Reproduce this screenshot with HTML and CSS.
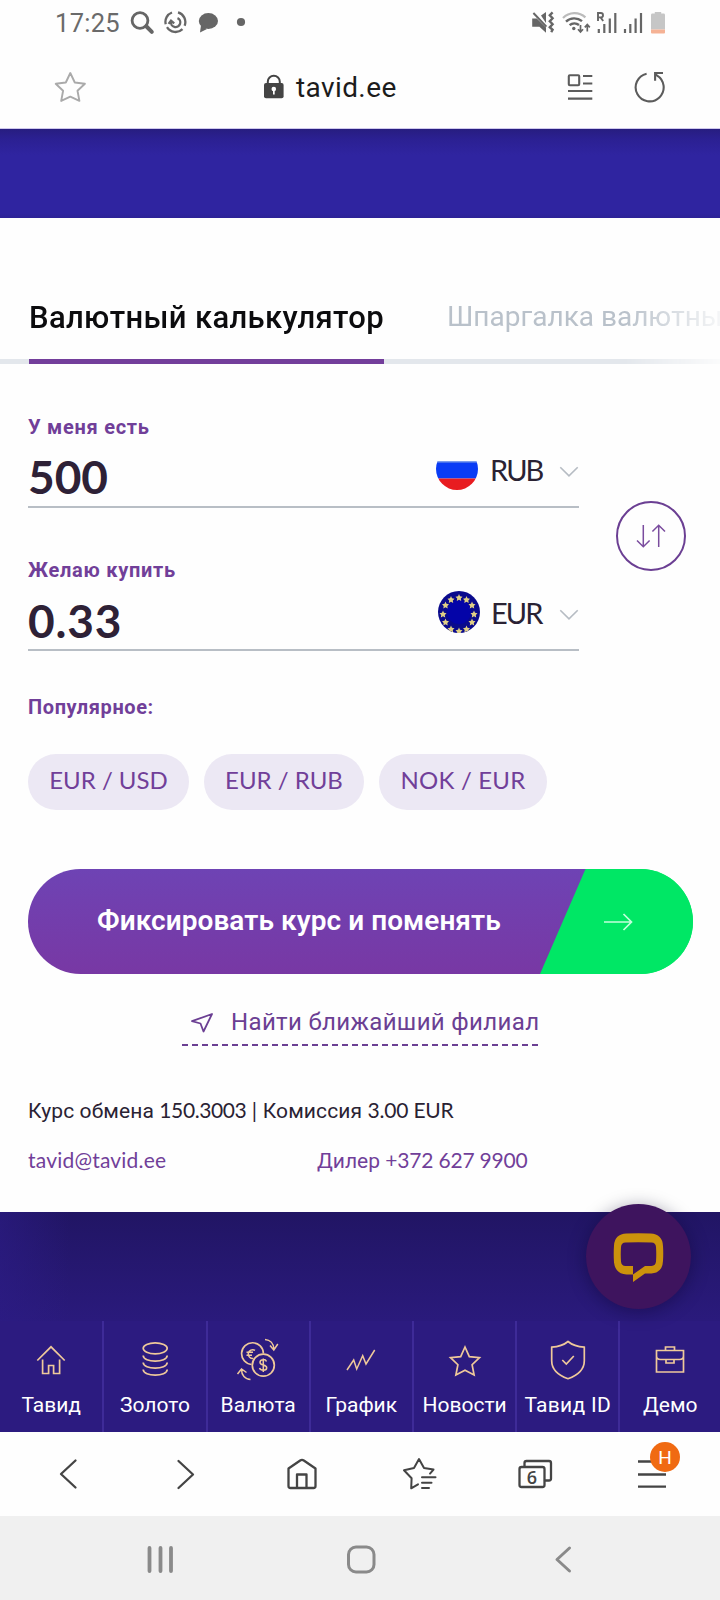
FILE: index.html
```html
<!DOCTYPE html>
<html lang="ru">
<head>
<meta charset="utf-8">
<title>tavid.ee</title>
<link rel="stylesheet" href="styles.css">
</head>
<body>
<div class="screen">

  <header class="status">
    <span class="clock">17:25</span>
    <svg class="ic-search" width="26" height="44" viewBox="129 0 26 44" fill="none" stroke="#666" stroke-linecap="round">
      <circle cx="140" cy="20.5" r="7.9" stroke-width="2.8"/><path d="M146.5 26.5L151.8 31.8" stroke-width="4"/>
    </svg>
    <svg class="ic-sync" width="24" height="44" viewBox="163 0 24 44" fill="none" stroke="#666" stroke-width="2.3">
      <path d="M172 12.500a10 10 0 0 0-6.300 11.700M167 27.200a10 10 0 0 0 15.500 2M184.600 25.800a10 10 0 0 0-6.600-13.400"/>
      <path d="M171 21.500a4.700 4.700 0 1 0 6.500-3.400M174.200 23.400l-3.200-2.700-2.400 3.200"/>
    </svg>
    <svg class="ic-bubble" width="22" height="44" viewBox="197 0 22 44" fill="#666">
      <ellipse cx="208.4" cy="21" rx="9.6" ry="7.9"/><path d="M201 25l-1 7.4 7-3.4z"/>
    </svg>
    <svg class="ic-dot" width="10" height="44" viewBox="236 0 10 44" fill="#666"><circle cx="241" cy="22" r="4.1"/></svg>

    <div class="status-right">
      <svg width="26" height="44" viewBox="530 0 26 44">
        <path fill="#666" d="M532.2 18.6h4.6l9.2 9v5.2l-6.600-6h-7.200zM541 15.600l5-3.600v11z"/>
        <path d="M533.400 13l13 13.600" stroke="#666" stroke-width="2"/>
        <path d="M552.600 12.400l-2.800 2.800 2.800 3-2.800 3 2.800 3-2.800 3 2.800 2.600-1.400 2.400" fill="none" stroke="#666" stroke-width="2.400"/>
      </svg>
      <svg width="30" height="44" viewBox="562 0 30 44" fill="none">
        <path d="M563 18a16 16 0 0 1 22.400-.6" stroke="#bbb" stroke-width="2.200"/>
        <path d="M566 21.600a12 12 0 0 1 16-.4M569.600 25.200a7.500 7.500 0 0 1 9.400-.2" stroke="#666" stroke-width="2.400"/>
        <circle cx="573.800" cy="28.500" r="1.700" fill="#666"/>
        <path d="M580.500 25v6.500M578 29.200l2.500 2.800 2.500-2.800M587.300 31.500v-6.500M584.800 27.400l2.500-2.800 2.500 2.800" stroke="#666" stroke-width="1.700"/>
      </svg>
      <svg class="ic-roam" width="24" height="44" viewBox="596 0 24 44" fill="none" stroke="#666">
        <path d="M598 21v-8h2.800a2 2 0 0 1 0 4.400h-2.800M600.600 17.400l2.600 3.600" stroke-width="1.900"/>
        <path d="M598.800 29v4M604.300 24v9M609.800 18.500v14.500M615.300 13v20" stroke-width="2.200"/>
      </svg>
      <svg class="ic-sig" width="22" height="44" viewBox="622 0 22 44" fill="none" stroke="#666">
        <path d="M625 29v4M630.300 24v9M635.600 18.500v14.500M641 13v20" stroke-width="2.200"/>
      </svg>
      <svg class="ic-bat" width="16" height="44" viewBox="650 0 16 44">
        <path fill="#c6c6c6" d="M651 15q0-1.400 1.400-1.400h2.400V12h6.400v1.600h2.400q1.400 0 1.400 1.400v14.500h-14z"/>
        <path fill="#f5b295" d="M651 29.400h14v3q0 1-1 1h-12q-1 0-1-1z"/>
      </svg>
    </div>
  </header>

  <div class="urlbar">
    <svg class="ic-fav" width="32" height="84" viewBox="54 44 32 84" fill="none" stroke="#aaa" stroke-width="1.900" stroke-linejoin="round">
      <path d="M70.300 73l4.500 9.500 10.100 1.300-7.400 7 1.900 10.100-9.100-4.200-9.100 4.200 1.900-10.100-7.400-7 10.100-1.300z"/>
    </svg>
    <div class="host">
      <svg width="22" height="84" viewBox="263 44 22 84">
        <rect x="264" y="83" width="19.600" height="15.200" rx="2" fill="#444"/>
        <path d="M267.800 84v-2.200a6 6 0 0 1 12 0v2.200" fill="none" stroke="#444" stroke-width="2"/>
        <circle cx="273.800" cy="89" r="2.300" fill="#fff"/><path d="M273 90h1.700v4.500h-1.700z" fill="#fff"/>
      </svg>
      <span class="host-name">tavid.ee</span>
    </div>
    <svg class="ic-reader" width="28" height="84" viewBox="566 44 28 84" fill="none" stroke="#5c5c5c" stroke-width="2.100">
      <rect x="568.800" y="75.300" width="10.400" height="10" rx="1"/>
      <path d="M583 76h9.300M583 83.500h9.300M568 91h24.300M568 98.600h24.300"/>
    </svg>
    <svg class="ic-reload" width="34" height="84" viewBox="634 44 34 84" fill="none" stroke="#5c5c5c" stroke-width="2.100">
      <path d="M646.600 73.700a14 14 0 1 0 10.200 1.600l-1.600-1.400"/><path d="M663 73h-7.900v7.800"/>
    </svg>
  </div>

  <div class="band-top"></div>

  <main class="card">
    <nav class="tabs">
      <a class="tab active">Валютный калькулятор</a>
      <a class="tab">Шпаргалка валютны</a>
    </nav>

    <section class="calc">
      <div class="fields">
        <div class="field">
          <label class="label">У меня есть</label>
          <div class="row">
            <span class="amount">500</span>
            <div class="cur">
              <svg class="flag" width="42" height="42" viewBox="0 0 42 42">
                <clipPath id="disc"><circle cx="21" cy="21" r="21"/></clipPath>
                <g clip-path="url(#disc)"><path fill="#fefefe" d="M0 0h42v13.500H0z"/><path fill="#0a3cf5" d="M0 13.500h42v17H0z"/><path fill="#7d9fe8" d="M0 13.200h42v1.200H0z"/><path fill="#e81c20" d="M0 30.500h42V42H0z"/></g>
              </svg>
              <span class="code">RUB</span>
              <svg class="chev" width="20" height="12" viewBox="0 0 20 12" fill="none" stroke="#b6bcc3" stroke-width="1.600"><path d="M1.300 1.300l8.700 8.500 8.700-8.500"/></svg>
            </div>
          </div>
        </div>
        <div class="field">
          <label class="label">Желаю купить</label>
          <div class="row">
            <span class="amount second">0.33</span>
            <div class="cur eur">
              <svg class="flag" width="42" height="42" viewBox="0 0 42 42">
                <defs><path id="st" d="M0-3.600L1-1.200 3.500-.8 1.800.9 2.200 3.400 0 2.200-2.200 3.400-1.800.9-3.500-.8-1-1.200z"/></defs>
                <circle cx="21" cy="21" r="21" fill="#0a0a8c"/><circle cx="21" cy="21" r="12" fill="#0404a8"/>
                <g fill="#e0cf86" clip-path="url(#disc)">
                  <use href="#st" x="21" y="6.500"/><use href="#st" x="28.500" y="8.500"/><use href="#st" x="34" y="14"/><use href="#st" x="36" y="23"/><use href="#st" x="34" y="31"/><use href="#st" x="28.500" y="38"/>
                  <use href="#st" x="21" y="40"/><use href="#st" x="13" y="38"/><use href="#st" x="7.500" y="31"/><use href="#st" x="5" y="23"/><use href="#st" x="7.500" y="14"/><use href="#st" x="13" y="8.500"/>
                </g>
              </svg>
              <span class="code">EUR</span>
              <svg class="chev" width="20" height="12" viewBox="0 0 20 12" fill="none" stroke="#b6bcc3" stroke-width="1.600"><path d="M1.300 1.300l8.700 8.500 8.700-8.500"/></svg>
            </div>
          </div>
        </div>
      </div>
      <button class="swap">
        <svg width="30" height="26" viewBox="636 523 30 26" fill="none" stroke="#7a4c9e" stroke-width="1.500"><path d="M643.300 525v21.500M637 540.500l6.300 6.300 6.300-6.300M658.700 547v-21.500M652.400 531.500l6.300-6.300 6.300 6.300"/></svg>
      </button>
    </section>

    <div class="label popular">Популярное:</div>
    <div class="pills">
      <a class="pill">EUR / USD</a>
      <a class="pill">EUR / RUB</a>
      <a class="pill nok">NOK / EUR</a>
    </div>

    <a class="cta">
      <span class="cta-text">Фиксировать курс и поменять</span>
      <span class="cta-arrow"><svg width="30" height="20" viewBox="603 912 30 20" fill="none" stroke="#c4ffdc" stroke-width="1.700"><path d="M604 922h27.500M623.500 914l8 8-8 8"/></svg></span>
    </a>

    <a class="branch">
      <svg width="24" height="22" viewBox="190 1012 24 22" fill="none" stroke="#6b3f93" stroke-width="1.800" stroke-linejoin="round"><path d="M212 1014l-20 7.200 8.500 2.300 3 8z"/></svg>
      <span>Найти ближайший филиал</span>
    </a>

    <p class="rate">Курс обмена <span class="n rate-n">150.3003</span><span class="n"> | </span>Комиссия <span class="n fee">3.00 EUR</span></p>
    <div class="contacts">
      <a class="mail n">tavid@tavid.ee</a>
      <a class="dealer">Дилер <span class="n">+372 627 9900</span></a>
    </div>
  </main>

  <div class="band-bottom">
    <div class="chat">
      <svg width="52" height="52" viewBox="613 1232 52 52"><path fill="#cc920c" fill-rule="evenodd" d="M627 1234.500q12-.6 24 0 12 .6 12.500 12.500.5 7.500 0 15-.5 11.500-11.500 12.500h-6.500l-12 8.500v-16h-7.500q-4.200-.2-4.500-4.500-.5-7 0-14.500.3-4.300 4.500-4.500 12.500-.5 26 0 4.200.2 4.500 4.500.5 7.500 0 14.500-.3 4.200-4.500 4.500h-6.500l-12 8.500h-6.500q-11-.5-12.500-12-.6-8.500 0-17 .6-11.500 12.500-12z" transform="translate(-.5 0)"/></svg>
    </div>
  </div>

  <nav class="sections">
    <a class="sec"><svg width="60" height="60" viewBox="21 1329 60 60"><path d="M37.300 1360.500l13.700-13.700 13.700 13.700M42.600 1359.500v14h6v-8h5v8h6v-14"/></svg><span>Тавид</span></a>
    <a class="sec"><svg width="60" height="60" viewBox="125 1329 60 60"><ellipse cx="155.200" cy="1348.300" rx="12" ry="5.500"/><path d="M143.200 1355.500c0 7.500 24 7.500 24 0M143.200 1362.500c0 7.500 24 7.500 24 0M143.200 1369.500c0 7.500 24 7.500 24 0"/></svg><span>Золото</span></a>
    <a class="sec"><svg width="60" height="60" viewBox="228 1329 60 60"><path d="M251.500 1364.500a10.900 10.900 0 1 1 11.900-11"/><circle cx="263.300" cy="1365.200" r="11"/>
      <path d="M255 1350.300a4.500 4.500 0 0 0-6.700 3.200 4.500 4.500 0 0 0 5 5M246.500 1352.300h6.500M246.500 1355.300h5.500M266.500 1361.500c-1-2.700-6.500-2.500-6.500.7 0 3.800 6.700 2 6.700 5.600 0 3.300-6.200 3.200-7.200.2M263.300 1358.500v13.500M265 1339.500c5 .3 8.700 4 9 10M270 1345.500l3.800 4.500 4-6M250.500 1379.500c-5.500-.2-9-4.500-9-10M237.500 1374l4-5 5 3.500" stroke-width="1.500"/></svg><span>Валюта</span></a>
    <a class="sec"><svg width="60" height="60" viewBox="331 1329 60 60"><path d="M347 1370l6.700-10 3 9 6-13.300 3.300 8.300 8.700-14" stroke-width="1.500"/></svg><span>График</span></a>
    <a class="sec"><svg width="60" height="60" viewBox="433 1329 60 60"><path d="M463 1347l4.300 9.600 10.200 1.100-7.400 7 2 10.300-9.100-4.700-9.100 4.700 2-10.300-7.400-7 10.200-1.100z"/></svg><span>Новости</span></a>
    <a class="sec id"><svg width="60" height="60" viewBox="537 1329 60 60"><path d="M567 1341.500c4.500 3.800 9.500 5.300 16.300 5.700v13.500c0 9-6.500 14.500-16.300 18-9.800-3.500-16.300-9-16.300-18v-13.500c6.800-.4 11.800-1.900 16.300-5.700zM561.300 1360l4 4 7.500-8"/></svg><span>Тавид ID</span></a>
    <a class="sec"><svg width="60" height="60" viewBox="640 1329 60 60"><path d="M656.500 1350.500h27v21.500h-27zM665.500 1350.500v-3.500h9v3.500M656.500 1356q0 3.500 4 3.500h19q4 0 4-3.500M666 1359.500v3.500h8v-3.500"/></svg><span>Демо</span></a>
  </nav>

  <footer class="browser-nav">
    <svg class="b-back" width="20" height="34" viewBox="59 1457 20 34"><path d="M75.500 1460.500l-14.500 13.500 14.500 13.500"/></svg>
    <svg class="b-fwd" width="20" height="34" viewBox="176 1457 20 34"><path d="M178.500 1461l14.500 13.500-14.500 13.500"/></svg>
    <svg class="b-home" width="32" height="34" viewBox="286 1457 32 34"><path d="M288.500 1468.500l11.700-8q1.800-1.200 3.600 0l11.700 8v17.500q0 2-2 2h-23q-2 0-2-2zM297 1488v-13.500h9.500v13.500"/></svg>
    <svg class="b-star" width="36" height="34" viewBox="402 1457 36 34"><path d="M418 1484.300l-6.800 4 .4-10-7.600-8 10-2.200 5-9 5 9 9.500 1.500-3.500 4M422 1477.300h13.500M422 1482.700h9.500M422 1488h7" stroke-width="2"/></svg>
    <div class="b-tabs">
      <svg width="36" height="34" viewBox="517 1457 36 34"><path d="M524.500 1466v-3q0-2 2-2h22.500q2 0 2 2v15.500q0 2-2 2h-4"/><rect x="519.500" y="1467" width="25" height="20" rx="2"/></svg>
      <span>6</span>
    </div>
    <div class="b-menu">
      <svg width="30" height="34" viewBox="637 1457 30 34"><path d="M638 1461.500h28M638 1474.500h28M638 1486.700h28" stroke-linecap="butt"/></svg>
      <span class="badge">Н</span>
    </div>
  </footer>

  <footer class="system-nav">
    <svg class="s-recent" width="30" height="32" viewBox="146 1543 30 32"><path d="M149.500 1548v23M160.500 1548v23M171 1548v23" stroke-width="3.800"/></svg>
    <svg class="s-home" width="32" height="32" viewBox="345 1543 32 32"><rect x="348.500" y="1547" width="25.500" height="25" rx="7.500"/></svg>
    <svg class="s-back" width="20" height="32" viewBox="553 1543 20 32"><path d="M569.500 1548l-12.500 11.500 12.500 11.500"/></svg>
  </footer>
</div>
</body>
</html>
```
FILE: styles.css
```css
* { box-sizing: border-box; margin: 0; padding: 0; }
body { width: 720px; font-family: Roboto, "Liberation Sans", sans-serif; background: #fefefe; }
svg { display: block; flex: none; }
span, a { white-space: pre; }
.screen { width: 720px; height: 1600px; overflow: hidden; display: flex; flex-direction: column; }
.screen > * { flex: none; }
.n { font-family: Lato, sans-serif; line-height: 1; }

/* status bar */
.status { height: 44px; display: flex; padding: 0 54px 0 55px; }
.clock { width: 74px; font-size: 25.500px; line-height: 46px; letter-spacing: .3px; color: #6a6a6a; }
.ic-sync { margin-left: 8px; }
.ic-bubble { margin-left: 10px; }
.ic-dot { margin-left: 17px; }
.status-right { margin-left: auto; display: flex; }
.status-right svg + svg { margin-left: 6px; }
.status-right .ic-roam { margin-left: 4px; }
.status-right .ic-sig { margin-left: 2px; }

/* address bar */
.urlbar { height: 84px; display: flex; padding-left: 54px; }
.host { display: flex; margin-left: 177px; width: 140px; gap: 11px; }
.host-name { font-size: 28px; line-height: 88px; letter-spacing: .4px; color: #1c1c1c; }
.ic-reader { margin-left: 163px; }
.ic-reload { margin-left: 40px; }

.band-top { height: 90px; border-top: 1px solid #cfc8ec; background: linear-gradient(#271d80 0, #2b2092 10px, #2f24a0 26px, #2f24a0 84px, #2d2296 100%); }

/* calculator card */
.card { height: 994px; background: #fefefe; }
.tabs { height: 146px; padding: 80px 0 0 29px; display: flex; gap: 63px; overflow: hidden;
  background: linear-gradient(#e3e7ec, #e3e7ec) 0 100% / 100% 5px no-repeat;
  -webkit-mask-image: linear-gradient(90deg, #000 625px, rgba(0,0,0,.12) 720px); mask-image: linear-gradient(90deg, #000 625px, rgba(0,0,0,.12) 720px); }
.tab { flex: none; height: 66px; font-size: 28px; line-height: 38px; letter-spacing: 0; color: #b9c1ca; }
.tab.active { width: 355px; font-size: 31px; line-height: 39px; font-weight: 500; letter-spacing: .36px; color: #0c0c0e; border-bottom: 5px solid #733e9b; }
.calc { display: flex; padding: 51px 0 0 28px; }
.fields { width: 551px; display: grid; gap: 50px; }
.field { height: 93px; border-bottom: 2px solid #b8bec5; }
.label { display: block; font-size: 20px; line-height: 24px; font-weight: 700; letter-spacing: .73px; color: #713f99; }
.row { display: flex; justify-content: space-between; }
.amount { margin-top: 13px; font: 700 46px/50px Lato, sans-serif; color: #2e2136; letter-spacing: 0; }
.amount.second { margin-top: 14px; letter-spacing: .8px; }
.cur { display: flex; width: 143px; margin-top: 9px; }
.eur { width: 141px; }
.code { width: 70px; margin-left: 12px; font: 400 29px/43px Lato, sans-serif; letter-spacing: -1.900px; color: #2a2233; }
.eur .code { margin-left: 11px; width: 69px; }
.chev { margin-top: 18px; }
.swap { margin: 86px 0 0 37px; width: 70px; height: 70px; border: 2px solid #6b3f93; border-radius: 50%; background: none; display: grid; place-items: center; }
.popular { margin: 44px 0 0 28px; letter-spacing: .6px; }
.pills { display: flex; gap: 15px; margin: 35px 0 0 28px; }
.pill { width: 161px; height: 56px; border-radius: 28px; background: #ece8f4; text-align: center; font: 400 24px/52px Lato, sans-serif; color: #713f99; }
.pill + .pill { width: 160px; }
.pill.nok { width: 168px; letter-spacing: .2px; }
.cta { display: flex; margin: 59px 0 0 28px; width: 665px; height: 105px; border-radius: 52.500px; overflow: hidden;
  background: linear-gradient(#00e765, #00e765) 100% 0 / 80px 100% no-repeat, linear-gradient(#6e43b4, #7838a4); }
.cta-text { width: 512px; padding-left: 69px; font-size: 28px; line-height: 103px; font-weight: 600; letter-spacing: .06px; color: #fff; }
.cta-arrow { width: 153px; display: flex; align-items: center; padding-left: 63px; background: #00e765; clip-path: polygon(45.500px 0, 100% 0, 100% 100%, 0 100%); }
.branch { display: flex; gap: 17px; margin: 28px 0 0 182px; width: 357px; height: 44px; padding-left: 8px; font-size: 24px; line-height: 40px; letter-spacing: .35px; color: #6b3f93;
  background: repeating-linear-gradient(90deg, #6b3f93 0 6px, transparent 6px 10px) 0 100% / 100% 2px no-repeat; }
.branch svg { margin-top: 10px; }
.rate { margin: 50px 0 0 28px; height: 30px; font-size: 21px; line-height: 30px; letter-spacing: .12px; color: #2a2233; white-space: pre; }
.rate-n { letter-spacing: -.4px; }
.fee { letter-spacing: -.2px; }
.contacts { display: flex; align-items: baseline; margin: 20px 0 0 28px; height: 30px; font-size: 21px; line-height: 30px; color: #713f99; }
.mail { width: 289px; letter-spacing: .2px; }
.dealer .n { letter-spacing: -.18px; }

/* lower band with the chat button */
.band-bottom { position: relative; height: 109px; background: linear-gradient(90deg, rgba(44,28,134,.6), rgba(44,28,134,0) 70px), linear-gradient(#211564, #2a1a7c); }
.chat { position: absolute; left: 586px; top: -8px; width: 105px; height: 105px; border-radius: 50%; background: #3e145e; box-shadow: 0 3px 18px rgba(10,0,40,.4); display: grid; place-items: center; }

.sections { height: 111px; display: flex; background: #2c1b80; }
.sec { width: 103.200px; flex: none; border-left: 2px solid #3e2b98; padding-top: 8px; color: #fff; font-size: 21px; line-height: 32px; }
.sec:first-child { width: 102.400px; border-left: 0; }
.sec:last-child { width: 102px; }
.sec svg { margin: 0 auto; fill: none; stroke: #efc99a; stroke-width: 1.700; }
.sec span { display: block; text-align: center; }
.sec.id span { letter-spacing: .3px; }

.browser-nav { height: 84px; background: #fefefe; display: flex; padding: 25px 0 0 59px; }
.browser-nav svg { fill: none; stroke: #444; stroke-width: 2.300; stroke-linecap: round; stroke-linejoin: round; }
.b-fwd { margin-left: 97px; }
.b-home { margin-left: 90px; }
.b-star { margin-left: 84px; }
.b-tabs { position: relative; margin-left: 79px; }
.b-tabs span { position: absolute; left: 2px; width: 26px; top: 10px; text-align: center; font: 600 18px/20px "Open Sans", sans-serif; color: #444; }
.b-menu { position: relative; margin-left: 84px; }
.badge { position: absolute; left: 13px; top: -15px; width: 30px; height: 30px; border-radius: 50%; background: #f06a12; color: #fff; text-align: center; font-size: 19px; line-height: 31px; }

.system-nav { height: 84px; background: #f0f0f0; display: flex; padding: 27px 0 0 146px; }
.system-nav svg { fill: none; stroke: #8a8a8a; stroke-width: 3; stroke-linecap: round; stroke-linejoin: round; }
.s-home { margin-left: 169px; }
.s-back { margin-left: 176px; }
```
